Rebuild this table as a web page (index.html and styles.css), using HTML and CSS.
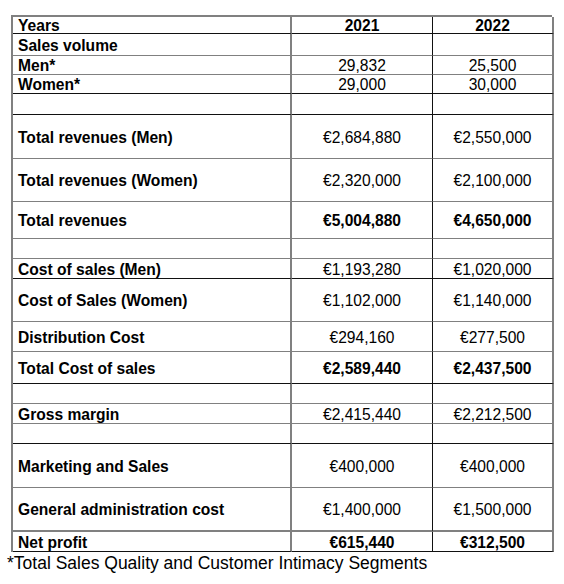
FILE: index.html
```html
<!DOCTYPE html>
<html lang="en">
<head>
    <meta charset="UTF-8">
    <meta name="viewport" content="width=device-width, initial-scale=1.0">
    <title>Profit and loss 2021 - 2022</title>
    <link rel="stylesheet" href="styles.css">
</head>
<body>
    <div class="page">
        <div class="sheet">
            <div class="row h19 line-dark head">
                <div class="label">Years</div>
                <div class="num">2021</div>
                <div class="num">2022</div>
            </div>
            <div class="row h22">
                <div class="label">Sales volume</div>
                <div class="num"></div>
                <div class="num"></div>
            </div>
            <div class="row h19">
                <div class="label">Men*</div>
                <div class="num">29,832</div>
                <div class="num">25,500</div>
            </div>
            <div class="row h19 line-dark">
                <div class="label">Women*</div>
                <div class="num">29,000</div>
                <div class="num">30,000</div>
            </div>
            <div class="row h21 line-dark">
                <div class="label"></div>
                <div class="num"></div>
                <div class="num"></div>
            </div>
            <div class="row h44">
                <div class="label">Total revenues (Men)</div>
                <div class="num">€2,684,880</div>
                <div class="num">€2,550,000</div>
            </div>
            <div class="row h43">
                <div class="label">Total revenues (Women)</div>
                <div class="num">€2,320,000</div>
                <div class="num">€2,100,000</div>
            </div>
            <div class="row h37 total">
                <div class="label">Total revenues</div>
                <div class="num">€5,004,880</div>
                <div class="num">€4,650,000</div>
            </div>
            <div class="row h20">
                <div class="label"></div>
                <div class="num"></div>
                <div class="num"></div>
            </div>
            <div class="row h20 line-dark">
                <div class="label">Cost of sales (Men)</div>
                <div class="num">€1,193,280</div>
                <div class="num">€1,020,000</div>
            </div>
            <div class="row h43">
                <div class="label">Cost of Sales (Women)</div>
                <div class="num">€1,102,000</div>
                <div class="num">€1,140,000</div>
            </div>
            <div class="row h30">
                <div class="label">Distribution Cost</div>
                <div class="num">€294,160</div>
                <div class="num">€277,500</div>
            </div>
            <div class="row h32 line-dark total">
                <div class="label">Total Cost of sales</div>
                <div class="num">€2,589,440</div>
                <div class="num">€2,437,500</div>
            </div>
            <div class="row h20">
                <div class="label"></div>
                <div class="num"></div>
                <div class="num"></div>
            </div>
            <div class="row h20">
                <div class="label">Gross margin</div>
                <div class="num">€2,415,440</div>
                <div class="num">€2,212,500</div>
            </div>
            <div class="row h20 line-dark">
                <div class="label"></div>
                <div class="num"></div>
                <div class="num"></div>
            </div>
            <div class="row h44">
                <div class="label">Marketing and Sales</div>
                <div class="num">€400,000</div>
                <div class="num">€400,000</div>
            </div>
            <div class="row h44 line-thick">
                <div class="label">General administration cost</div>
                <div class="num">€1,400,000</div>
                <div class="num">€1,500,000</div>
            </div>
            <div class="row h20 line-dark total">
                <div class="label">Net profit</div>
                <div class="num">€615,440</div>
                <div class="num">€312,500</div>
            </div>
        </div>
        <p class="note">*Total Sales Quality and Customer Intimacy Segments</p>
    </div>
</body>
</html>
```

FILE: styles.css
```css
body {
    margin: 0;
    padding: 0;
    background-color: #fff;
    color: #000;
    font-family: "Liberation Sans", Arial, sans-serif;
}

.page {
    padding-top: 15px;
}

.sheet {
    display: grid;
    grid-template-columns: 279px 141px 121px;
    width: 541px;
    margin-left: 11px;
    border-top: 2px solid #808080;
    border-left: 2px solid #808080;
    box-sizing: border-box;
}

.row {
    display: contents;
}

.row > div {
    box-sizing: border-box;
    display: flex;
    align-items: center;
    padding-top: 2px;
    font-size: 15.6px;
    line-height: 16px;
    border-bottom: 1px solid #808080;
}

.label {
    font-weight: bold;
    padding-left: 5px;
    border-right: 2px solid #808080;
}

.num {
    justify-content: center;
    border-right: 1px solid #111;
}

.num:last-child {
    border-right: 2px solid #808080;
}

.head .num,
.total .num {
    font-weight: bold;
}

/* linien zwischen den zeilen */
.row.line-dark > div {
    border-bottom-color: #111;
}

.row.line-thick > div {
    border-bottom-width: 2px;
}

/* zeilenhoehen wie in der vorlage */
.h19 > div { height: 19px; }
.h20 > div { height: 20px; }
.h21 > div { height: 21px; }
.h22 > div { height: 22px; }
.h30 > div { height: 30px; }
.h32 > div { height: 32px; }
.h37 > div { height: 37px; }
.h42 > div { height: 42px; }
.h43 > div { height: 43px; }
.h44 > div { height: 44px; }

.h19:first-child > div {
    height: 17px;
}

.note {
    margin: 0;
    padding-top: 1px;
    padding-left: 7px;
    font-size: 17.5px;
    line-height: 20px;
}
```
